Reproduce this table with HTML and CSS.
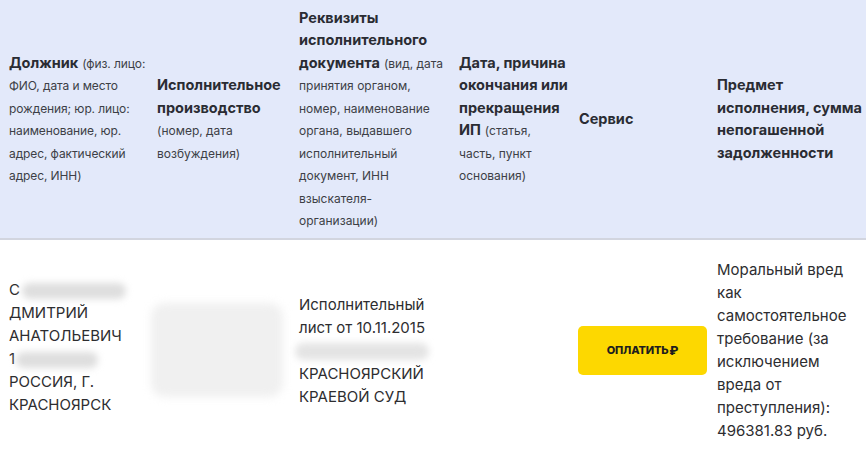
FILE: index.html
```html
<!DOCTYPE html>
<html lang="ru">
<head>
<meta charset="utf-8">
<title>Исполнительные производства</title>
<link rel="stylesheet" href="styles.css">
</head>
<body>
<table class="ip-table">
  <thead>
    <tr class="head-row">
      <th class="c1"><b>Должник</b> <span class="hint">(физ. лицо: ФИО, дата и место рождения; юр. лицо: наименование, юр. адрес, фактический адрес, ИНН)</span></th>
      <th class="c2"><b>Исполнительное производство</b> <span class="hint">(номер, дата возбуждения)</span></th>
      <th class="c3"><b>Реквизиты исполнительного документа</b> <span class="hint">(вид, дата принятия органом, номер, наименование органа, выдавшего исполнительный документ, ИНН взыскателя-организации)</span></th>
      <th class="c4"><b>Дата, причина окончания или прекращения ИП</b> <span class="hint">(статья, часть, пункт основания)</span></th>
      <th class="c5"><b>Сервис</b></th>
      <th class="c6"><b>Предмет исполнения, сумма непогашенной задолженности</b></th>
    </tr>
  </thead>
  <tbody>
    <tr class="body-row">
      <td class="c1">
        <div class="line">С<span class="blur blur-name"></span></div>
        <div class="line">ДМИТРИЙ</div>
        <div class="line">АНАТОЛЬЕВИЧ</div>
        <div class="line">1<span class="blur blur-date"></span></div>
        <div class="line">РОССИЯ, Г.</div>
        <div class="line">КРАСНОЯРСК</div>
      </td>
      <td class="c2"><div class="blur blur-box"></div></td>
      <td class="c3">
        <div class="line">Исполнительный</div>
        <div class="line">лист от 10.11.2015</div>
        <div class="line"><span class="blur blur-num"></span></div>
        <div class="line">КРАСНОЯРСКИЙ</div>
        <div class="line">КРАЕВОЙ СУД</div>
      </td>
      <td class="c4"></td>
      <td class="c5"><button class="pay-btn" type="button">ОПЛАТИТЬ<span class="rub">₽</span></button></td>
      <td class="c6">Моральный вред как самостоятельное требование (за исключением вреда от преступления): 496381.83 руб.</td>
    </tr>
  </tbody>
</table>
</body>
</html>
```

FILE: styles.css
```css
html, body {
  margin: 0;
  padding: 0;
  background: #ffffff;
}

body {
  font-family: Inter, Roboto, "Noto Sans", sans-serif;
  color: #2b2c31;
  overflow: hidden;
}

.ip-table {
  width: 866px;
  table-layout: fixed;
  border-collapse: collapse;
  border-spacing: 0;
}

.c1 { width: 148px; }
.c2 { width: 142px; }
.c3 { width: 160px; }
.c4 { width: 120px; }
.c5 { width: 138px; }
.c6 { width: 158px; }

.head-row {
  background: #e3e9fa;
  border-bottom: 2px solid #d2d5df;
}

.head-row th {
  height: 239px;
  box-sizing: border-box;
  padding: 0 0 0 9px;
  text-align: left;
  vertical-align: middle;
  font-weight: 400;
  font-size: 14px;
  line-height: 22.5px;
  color: #2a2c33;
}

.head-row th.c3 {
  padding-right: 4px;
}

.head-row th b {
  font-weight: 700;
  font-size: 14.5px;
  line-height: 1;
}

.hint {
  font-size: 12px;
  line-height: 1;
  color: #3d3f46;
}

.head-row th.c1 .hint {
  letter-spacing: -0.1px;
}

.body-row td {
  padding: 18px 4px 18px 9px;
  vertical-align: middle;
  font-size: 15px;
  line-height: 23px;
  color: #2d2d30;
}

.body-row td.c1 {
  padding-bottom: 24px;
}

.body-row td.c5 {
  padding-left: 8px;
}

.line {
  white-space: nowrap;
}

.blur {
  display: inline-block;
  background: #dedede;
  border-radius: 10px;
  filter: blur(3.5px);
  vertical-align: middle;
}

.blur-name {
  width: 104px;
  height: 16px;
  margin-left: 2px;
}

.blur-date {
  width: 82px;
  height: 16px;
  margin-left: 1px;
}

.blur-num {
  width: 134px;
  height: 17px;
  margin-left: -4px;
  background: #e4e4e4;
}

.blur-box {
  display: block;
  width: 132px;
  height: 94px;
  margin-left: -6px;
  background: #f0f0f0;
  border-radius: 14px;
  filter: blur(4px);
}

.pay-btn {
  display: flex;
  align-items: center;
  justify-content: center;
  width: 129px;
  height: 49px;
  border: none;
  border-radius: 5px;
  background: #fdd800;
  color: #1e1e1e;
  font-family: Inter, Roboto, sans-serif;
  font-size: 11px;
  font-weight: 800;
  letter-spacing: -0.2px;
  cursor: pointer;
  padding: 0;
}

.rub {
  margin-left: 1px;
  font-size: 12px;
}
```
